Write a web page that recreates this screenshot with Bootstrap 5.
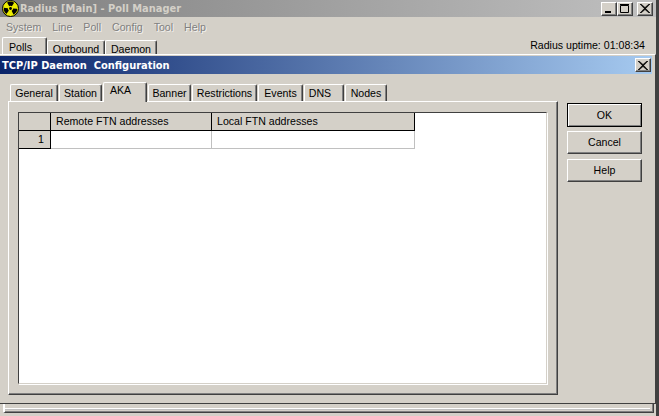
<!DOCTYPE html>
<html lang="en">
<head>
<meta charset="utf-8">
<title>Radius</title>
<link href="https://cdn.jsdelivr.net/npm/bootstrap@5.3.0/dist/css/bootstrap.min.css" rel="stylesheet">
<style>
:root{--face:#d4d0c8;--shade:#808080;--dark:#404040;}
html,body{margin:0;height:100%;}
body{background:var(--face);font-family:"Liberation Sans",Arial,sans-serif;font-size:10.6px;color:#000;line-height:1;overflow:hidden;}
.app-win{position:relative;width:659px;height:416px;overflow:hidden;background:var(--face);border-right:3px solid var(--dark);}
.bar-main{height:17px;background:linear-gradient(90deg,#808080,#c0c0c0);color:#d4d0c8;font:bold 9.9px "DejaVu Sans",sans-serif;padding-left:2px;gap:1px;}
.bar-main svg{display:block;}
.sys-btn{width:16px;height:14px;background:var(--face);border:1px solid;border-color:#fff #404040 #404040 #fff;box-shadow:inset -1px -1px 0 #808080;padding:0;display:flex;align-items:center;justify-content:center;}
.sys-btns{margin-left:auto;margin-right:3px;}
.menu-row{height:20px;padding-left:6px;gap:11px;color:#808080;text-shadow:1px 1px 0 #f4f2ee;font-size:10.6px;}
.top-tabs{height:17px;padding-left:2px;position:relative;}
.win-tab{background:var(--face);border:1px solid;border-color:#fff #404040 transparent #fff;border-bottom:0;border-radius:2px 2px 0 0;box-shadow:inset -1px 0 0 #808080;display:flex;align-items:center;justify-content:center;}
.top-tabs .win-tab{height:14px;padding-top:3px;}
.top-tabs .tab-on{height:17px;padding-top:3px;padding-right:8px;}
.uptime{margin-left:auto;margin-right:11px;align-self:flex-end;padding-bottom:3px;}
.dlg{position:absolute;left:0;top:54px;width:656px;height:350px;background:var(--face);border-top:1px solid #fff;border-right:1px solid #404040;border-bottom:1px solid #404040;padding-top:1px;}
.bar-dlg{height:18px;background:linear-gradient(90deg,#0a246a,#a6caf0);color:#fff;font:bold 9.9px "DejaVu Sans",sans-serif;padding-left:2px;margin-right:3px;white-space:pre;}
.bar-dlg .sys-btn{margin-left:auto;margin-right:1px;}
.dlg-body{padding:7px 0 0 8px;}
.dlg-left{width:550px;}
.tab-row{height:20px;padding-left:2px;position:relative;z-index:1;gap:1px;}
.tab-row .win-tab{height:17px;padding-top:1px;}
.tab-row .tab-on{height:20px;padding-top:0;padding-bottom:4px;margin-bottom:-1px;padding-right:9px;}
.tab-panel{height:294px;border:1px solid;border-color:#fff #404040 #404040 #fff;box-shadow:inset -1px -1px 0 #808080;padding:10px 10px 10px 9px;}
.grid-well{height:100%;background:#fff;border:1px solid;border-color:#404040 #d4d0c8 #d4d0c8 #404040;box-shadow:1px 1px 0 #fff;}
.ftn{border-collapse:separate;border-spacing:0;table-layout:fixed;width:396px;}
.ftn th,.ftn td{padding:0;height:18px;font-weight:400;}
.ftn .cell-fix{background:var(--face);border-right:1px solid #000;border-bottom:1px solid #000;}
.ftn .cell-head{text-align:left;padding-left:5px;}
.ftn .cell-num{text-align:right;padding-right:6px;}
.ftn .cell-data{border-right:1px solid #c0c0c0;border-bottom:1px solid #c0c0c0;}
.col-a{width:32px}.col-b{width:161px}.col-c{width:203px}
.side-btns{width:75px;margin:22px 0 0 9px;}
.win-btn{width:75px;background:var(--face);border:1px solid;border-color:#fff #404040 #404040 #fff;box-shadow:inset -1px -1px 0 #808080;display:flex;align-items:center;justify-content:center;padding:0;color:#000;font-size:10.6px;}
.btn-ok{height:24px;outline:1px solid #000;outline-offset:-1px;border-color:#000;box-shadow:inset 1px 1px 0 #fff,inset -1px -1px 0 #808080;}
.btn-cancel{height:23px;margin-top:4px;}
.btn-help{height:23px;margin-top:5px;}
.tw-45{width:45px}.tw-58{width:58px}.tw-52{width:52px}.tw-48{width:48px}.tw-43{width:43px}.tw-44{width:44px}.tw-65{width:65px}.tw-42{width:42px}
.tw-dns{width:40px;padding-right:8px;}
.frame-base{position:absolute;left:3px;top:403px;right:2px;height:10px;border-left:2px solid #fff;border-right:1px solid #404040;border-bottom:1px solid #404040;box-shadow:inset -1px -1px 0 #808080;}
.frame-line{position:absolute;left:5px;right:6px;top:408px;height:1px;background:#fff;box-shadow:0 1px 0 #c0c0c0;}
</style>
</head>
<body>
<div class="app-win">
  <div class="bar-main d-flex align-items-center">
    <svg width="17" height="17" viewBox="0 0 17 17" aria-hidden="true"><circle cx="8.500" cy="8.500" r="8" fill="#ecec00" stroke="#000"/><circle cx="8.500" cy="8.500" r="1.400" fill="#000"/><circle cx="8.500" cy="8.500" r="4.700" fill="none" stroke="#000" stroke-width="4.200" stroke-dasharray="4.920 4.920" transform="rotate(-120 8.500 8.500)"/></svg>
    <span>Radius [Main] - Poll Manager</span>
    <div class="sys-btns d-flex">
      <button class="sys-btn" aria-label="Minimize"><svg width="10" height="9"><rect x="1" y="7" width="6" height="2"/></svg></button>
      <button class="sys-btn" aria-label="Maximize"><svg width="10" height="9"><path d="M.5 1.500h8v7h-8zM0 .5h9" fill="none" stroke="#000"/></svg></button>
      <button class="sys-btn ms-1" aria-label="Close"><svg width="10" height="9"><path d="M1 0l4 3.500L9 0h1L5.700 4.500 10 9H9L5 5.500 1 9H0l4.300-4.500L0 0z" stroke="#000" stroke-width=".6"/></svg></button>
    </div>
  </div>
  <div class="menu-row d-flex align-items-center">
    <span>System</span><span>Line</span><span>Poll</span><span>Config</span><span>Tool</span><span>Help</span>
  </div>
  <div class="top-tabs d-flex align-items-end">
    <div class="win-tab tab-on tw-45">Polls</div>
    <div class="win-tab tw-58">Outbound</div>
    <div class="win-tab tw-52">Daemon</div>
    <div class="uptime">Radius uptime: 01:08:34</div>
  </div>
  <div class="frame-base"></div>
  <div class="frame-line"></div>

  <div class="dlg">
    <div class="bar-dlg d-flex align-items-center">
      <span>TCP/IP Daemon  Configuration</span>
      <button class="sys-btn" aria-label="Close"><svg width="10" height="9"><path d="M1 0l4 3.500L9 0h1L5.700 4.500 10 9H9L5 5.500 1 9H0l4.300-4.500L0 0z" stroke="#000" stroke-width=".6"/></svg></button>
    </div>
    <div class="dlg-body d-flex">
      <div class="dlg-left">
        <div class="tab-row d-flex align-items-end">
          <div class="win-tab tw-48">General</div>
          <div class="win-tab tw-43">Station</div>
          <div class="win-tab tab-on tw-44">AKA</div>
          <div class="win-tab tw-43">Banner</div>
          <div class="win-tab tw-65">Restrictions</div>
          <div class="win-tab tw-45">Events</div>
          <div class="win-tab tw-dns">DNS</div>
          <div class="win-tab tw-42">Nodes</div>
        </div>
        <div class="tab-panel">
          <div class="grid-well">
            <table class="ftn">
              <colgroup><col class="col-a"><col class="col-b"><col class="col-c"></colgroup>
              <tr><th class="cell-fix"></th><th class="cell-fix cell-head">Remote FTN addresses</th><th class="cell-fix cell-head">Local FTN addresses</th></tr>
              <tr><td class="cell-fix cell-num">1</td><td class="cell-data"></td><td class="cell-data"></td></tr>
            </table>
          </div>
        </div>
      </div>
      <div class="side-btns">
        <button class="win-btn btn-ok">OK</button>
        <button class="win-btn btn-cancel">Cancel</button>
        <button class="win-btn btn-help">Help</button>
      </div>
    </div>
  </div>
</div>
<script src="https://cdn.jsdelivr.net/npm/bootstrap@5.3.0/dist/js/bootstrap.bundle.min.js"></script>
</body>
</html>
